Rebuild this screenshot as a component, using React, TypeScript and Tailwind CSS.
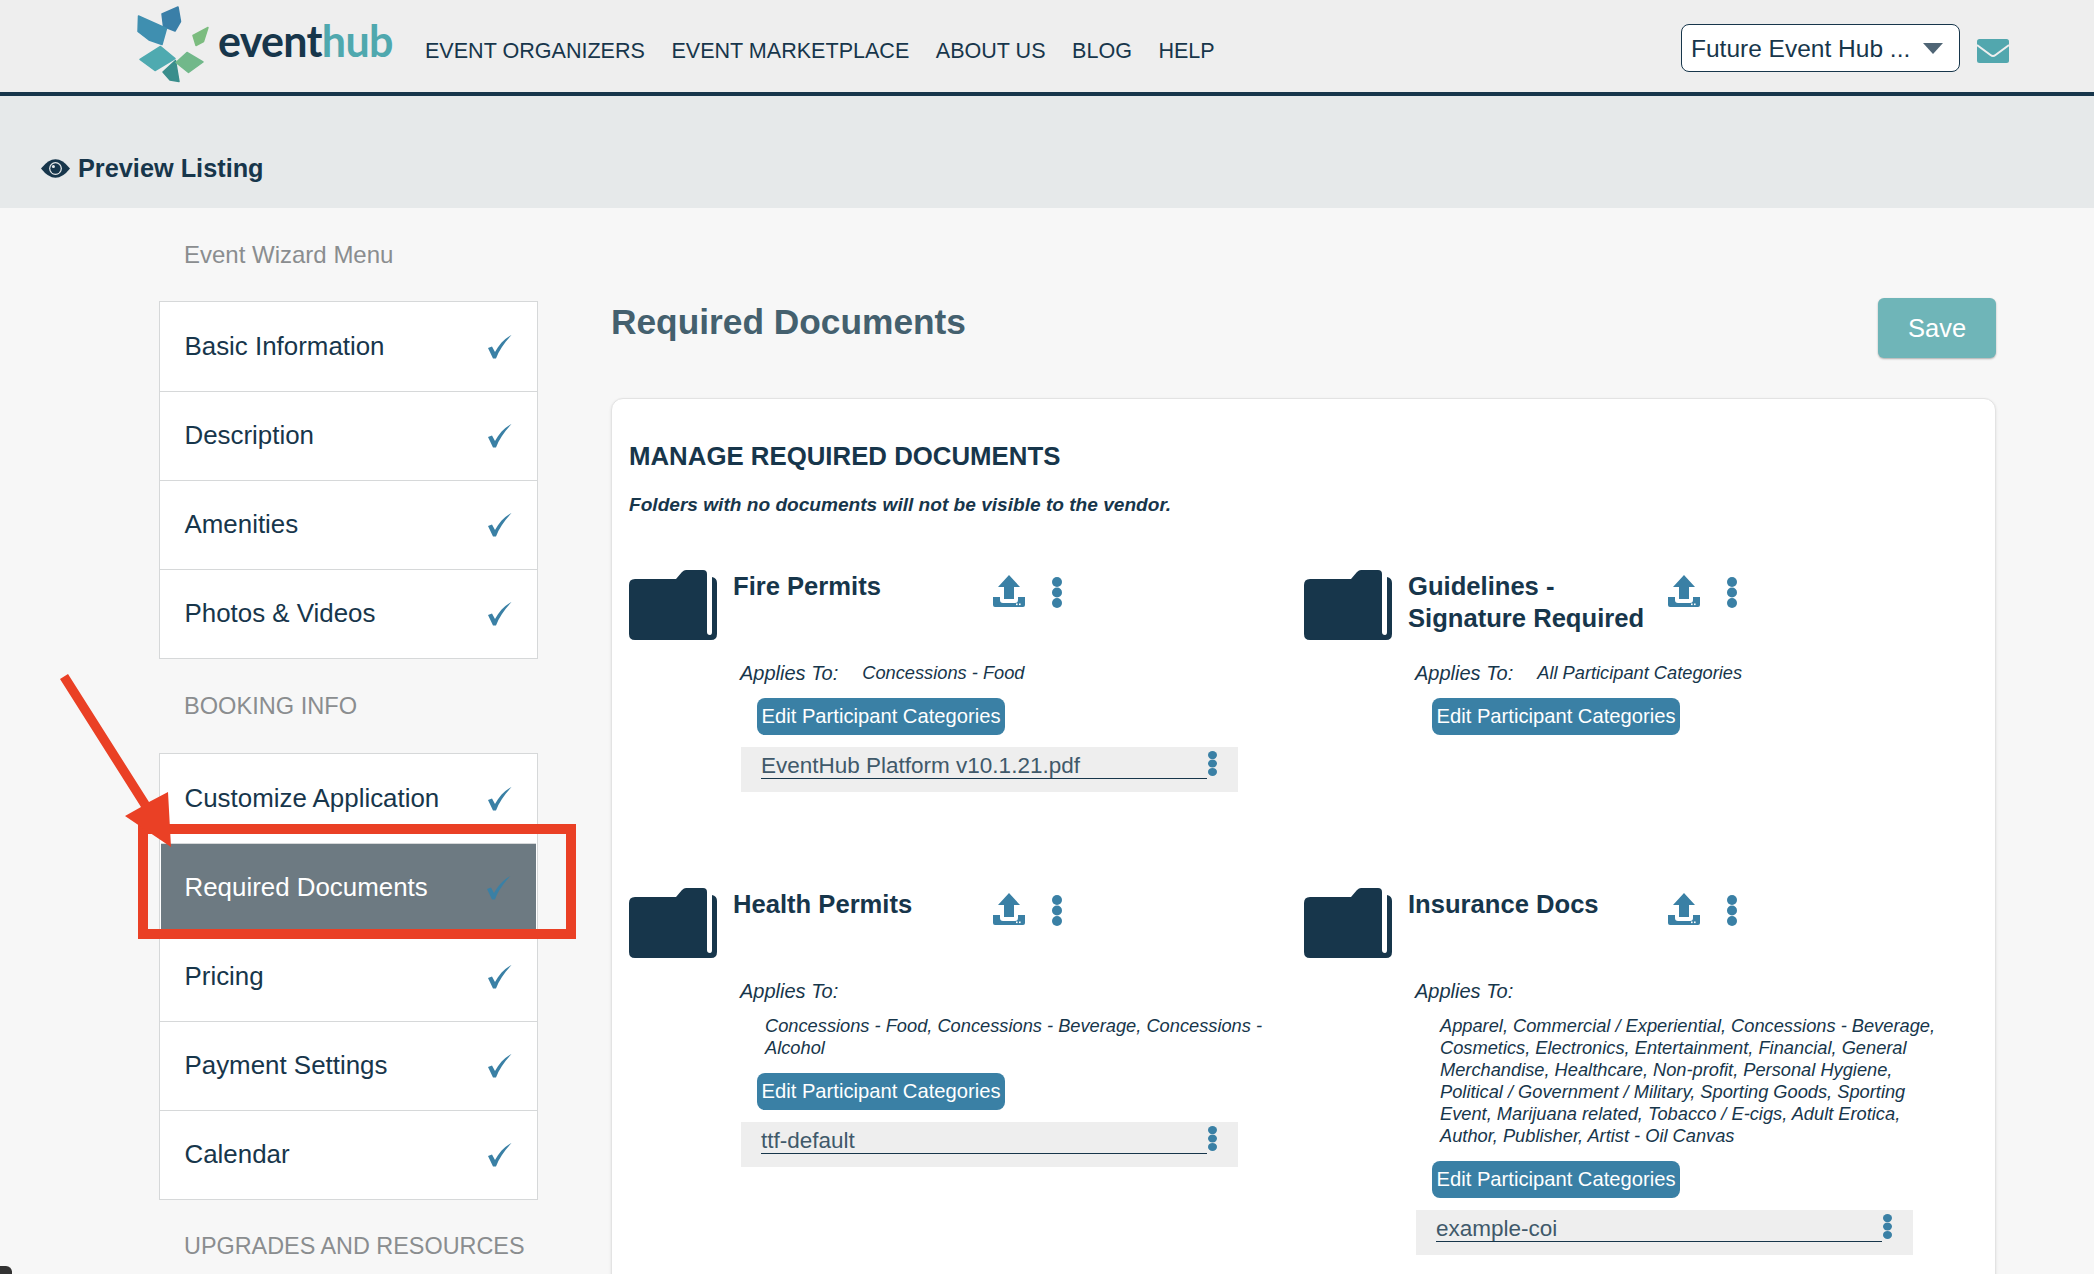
import React from 'react'

const navLinks = ['EVENT ORGANIZERS', 'EVENT MARKETPLACE', 'ABOUT US', 'BLOG', 'HELP']
const wizardItems = ['Basic Information', 'Description', 'Amenities', 'Photos & Videos']
const bookingItems = ['Customize Application', 'Required Documents', 'Pricing', 'Payment Settings', 'Calendar']

function Logo() {
  return (
    <svg width="76" height="84" viewBox="0 0 76 84" className="shrink-0">
      <g strokeWidth="1.5" strokeLinejoin="round">
        <polygon points="25,14 41,7 43.5,21.5 38,31 26.5,26.5" fill="#3a7fa8" stroke="#3a7fa8" />
        <polygon points="1.5,16 29.5,28.5 25,44.5 12,40 1,31.5" fill="#3f8fb0" stroke="#3f8fb0" />
        <polygon points="3,59.5 23.5,46.5 38,58.5 18,70.5" fill="#4faab0" stroke="#4faab0" />
        <polygon points="26,72 38.5,60.5 42,81.5 33,80" fill="#3a8e8c" stroke="#3a8e8c" />
        <polygon points="39,62.5 50,52.5 66,62 51.5,72.5" fill="#71b88a" stroke="#71b88a" />
        <polygon points="56,35.5 71,27.5 66.5,41.5 59,45.5" fill="#7cbc7f" stroke="#7cbc7f" />
      </g>
    </svg>
  )
}

function Check() {
  return (
    <svg width="24" height="24" viewBox="0 0 24 24" className="shrink-0">
      <path d="M0 13 L4 11.5 L7 17 C11 10 16 4 23.5 0 C17 7 11 15 8 23.5 L5 23.5 Z" fill="#3a80a5" />
    </svg>
  )
}

function Dots({ small }: { small?: boolean }) {
  return (
    <svg width={small ? 9 : 10} height={small ? 25 : 31} viewBox="0 0 10 31" preserveAspectRatio="none" className="shrink-0">
      <ellipse cx="5" cy="5" rx="5" ry="5" fill="#3a80a5" />
      <ellipse cx="5" cy="15.5" rx="5" ry="5" fill="#3a80a5" />
      <ellipse cx="5" cy="26" rx="5" ry="5" fill="#3a80a5" />
    </svg>
  )
}

function Folder() {
  return (
    <svg width="88" height="70" viewBox="0 0 88 70" className="shrink-0">
      <path
        d="M6 9 H47 L53 2 Q55 0 57 0 H74 Q78 0 78 4 V62 Q78 65 81 65 Q83 65 83 62 V7 Q88 8 88 13 V64 Q88 70 82 70 H6 Q0 70 0 64 V15 Q0 9 6 9 Z"
        fill="#17364b"
      />
    </svg>
  )
}

function UploadIcon() {
  return (
    <svg width="32" height="32" viewBox="0 0 32 32" className="shrink-0">
      <path d="M16 0 L27 12 H21 V24 H11 V12 H5 Z" fill="#3a80a5" />
      <path d="M0 22 H7 V25 Q7 28 10 28 H22 Q25 28 25 25 V22 H32 V30 Q32 32 30 32 H2 Q0 32 0 30 Z" fill="#3a80a5" />
      <rect x="23" y="28.5" width="1.6" height="1.6" fill="#fff" />
      <rect x="26" y="28.5" width="1.6" height="1.6" fill="#fff" />
    </svg>
  )
}

function MenuCard({ items, active }: { items: string[]; active?: string }) {
  return (
    <div className="border border-[#d6d8d9] bg-white">
      {items.map((item, idx) => (
        <div
          key={item}
          className={`flex h-[89px] items-center justify-between pr-[25px] ${idx > 0 ? 'border-t border-[#d6d8d9]' : ''} ${
            item === active ? 'mx-[1px] bg-[#6d7a82] pl-[23.5px] pr-[24px] text-white' : 'pl-[24.5px] text-[#17364b]'
          }`}
        >
          <span className="text-[25.9px] leading-none">{item}</span>
          <Check />
        </div>
      ))}
    </div>
  )
}

interface DocFolderProps {
  title: React.ReactNode
  applies: string
  inline?: boolean
  file?: string
}

function DocFolder({ title, applies, inline, file }: DocFolderProps) {
  return (
    <div className="min-h-[318px]">
      <div className="flex h-[70px] items-start">
        <Folder />
        <div className="ml-[16px] w-[260px] text-[25.6px] font-bold leading-[32px] text-[#17364b]">{title}</div>
        <div className="mt-[5px]">
          <UploadIcon />
        </div>
        <div className="ml-[27px] mt-[7px]">
          <Dots />
        </div>
      </div>
      <div className="ml-[111px] mt-[21px] flex text-[20px] italic leading-[24px] text-[#17364b]">
        <span>Applies To:</span>
        {inline && <span className="ml-[24px] text-[18.25px]">{applies}</span>}
      </div>
      {!inline && (
        <p className="ml-[136px] mb-[14px] mt-[12px] w-[510px] text-[18.25px] italic leading-[22px] text-[#17364b]">{applies}</p>
      )}
      <div className={`ml-[128px] flex h-[37px] w-[248px] items-center justify-center rounded-lg bg-[#3a80a5] text-[20.2px] text-white ${inline ? 'mt-[13px]' : ''}`}>
        Edit Participant Categories
      </div>
      {file && (
        <div className="ml-[112px] mt-[12px] flex h-[45px] w-[497px] items-start bg-[#eeeeee] pl-[20px] pr-[21px]">
          <div className="h-[32px] flex-1 border-b border-[#17364b] pt-[5px] text-[22.5px] leading-[28px] text-[#40596a]">
            {file}
          </div>
          <div className="ml-[1px] mt-[4px]">
            <Dots small />
          </div>
        </div>
      )}
    </div>
  )
}

export default function App() {
  return (
    <div className="relative h-[1274px] w-[2094px] overflow-hidden bg-[#f7f7f7] font-['Liberation_Sans',sans-serif]">
      <header className="flex h-[96px] items-center border-b-[4px] border-[#17364b] bg-[#eeeeee] pl-[137px] pr-[85px] shadow-[0_2px_4px_rgba(0,0,0,0.35)]">
        <div className="-mt-[8px] flex w-[288px] items-start">
          <Logo />
          <span className="ml-[5px] mt-[19px] font-['Lato',sans-serif] text-[43px] font-bold leading-none tracking-[-0.7px]">
            <span className="text-[#17364b]">event</span>
            <span className="text-[#4fa8ae]">hub</span>
          </span>
        </div>
        <nav className="mt-[11px] flex gap-[26.5px] text-[21.55px] text-[#17364b]">
          {navLinks.map((link) => (
            <span key={link}>{link}</span>
          ))}
        </nav>
        <div className="ml-auto mt-[4px] flex h-[48px] w-[279px] items-center rounded-lg border border-[#17364b] bg-white pl-[9px] pr-[16px] text-[24.5px] text-[#17364b]">
          <span className="flex-1 pt-[3px]">Future Event Hub ...</span>
          <svg width="20" height="11" viewBox="0 0 20 11">
            <polygon points="0,0 20,0 10,11" fill="#4f6575" />
          </svg>
        </div>
        <svg width="32" height="24" viewBox="0 0 32 24" className="ml-[17px] mt-[10px]">
          <rect width="32" height="24" rx="2.5" fill="#52a7ae" />
          <path d="M0 6 L13.5 16 Q16 18 18.5 16 L32 6" fill="none" stroke="#eeeeee" strokeWidth="2" />
        </svg>
      </header>

      <div className="flex h-[112px] items-end bg-[#e6e9ea] pb-[24px] pl-[41px]">
        <div className="flex items-center gap-[8px] text-[25.3px] font-bold leading-[32px] text-[#17364b]">
          <svg width="29" height="19" viewBox="0 0 28 18">
            <path d="M0 9 Q7 0 14 0 Q21 0 28 9 Q21 18 14 18 Q7 18 0 9 Z" fill="#17364b" />
            <circle cx="14" cy="9" r="6.2" fill="#e6e9ea" />
            <circle cx="14" cy="9" r="5" fill="#17364b" />
            <circle cx="12" cy="7" r="1.5" fill="#e6e9ea" />
          </svg>
          Preview Listing
        </div>
      </div>

      <div className="flex">
        <aside className="ml-[159px] w-[379px] shrink-0">
          <div className="flex h-[93px] items-center pl-[25px] text-[24px] text-[#8a8d8f]">Event Wizard Menu</div>
          <MenuCard items={wizardItems} />
          <div className="flex h-[94px] items-center pl-[25px] pt-[1px] text-[23.6px] text-[#8a8d8f]">BOOKING INFO</div>
          <MenuCard items={bookingItems} active="Required Documents" />
          <div className="flex h-[94px] items-center whitespace-nowrap pl-[25px] text-[23.4px] text-[#8a8d8f]">UPGRADES AND RESOURCES</div>
        </aside>

        <main className="ml-[73px] w-[1385px] shrink-0 pt-[90px]">
          <div className="flex items-start justify-between">
            <h1 className="pt-[1px] text-[35.3px] font-bold leading-[46px] text-[#44606e]">Required Documents</h1>
            <div className="flex h-[60px] w-[118px] items-center justify-center rounded-md bg-[#6fb5b8] text-[25.5px] text-white shadow-[0_1px_2px_rgba(0,0,0,0.3)]">
              Save
            </div>
          </div>
          <section className="mt-[40px] h-[1000px] rounded-xl border border-[#e3e3e3] bg-white pl-[17px] pt-[41px] shadow-[0_1px_3px_rgba(0,0,0,0.1)]">
            <h2 className="text-[25.8px] font-bold leading-[32px] text-[#17364b]">MANAGE REQUIRED DOCUMENTS</h2>
            <p className="mt-[21px] text-[19.1px] font-bold italic leading-[24px] text-[#17364b]">
              Folders with no documents will not be visible to the vendor.
            </p>
            <div className="mt-[53px] grid grid-cols-[675px_675px]">
              <DocFolder title="Fire Permits" applies="Concessions - Food" inline file="EventHub Platform v10.1.21.pdf" />
              <DocFolder
                title={
                  <>
                    Guidelines -<br />
                    Signature Required
                  </>
                }
                applies="All Participant Categories"
                inline
              />
              <DocFolder
                title="Health Permits"
                applies="Concessions - Food, Concessions - Beverage, Concessions - Alcohol"
                file="ttf-default"
              />
              <DocFolder
                title="Insurance Docs"
                applies="Apparel, Commercial / Experiential, Concessions - Beverage, Cosmetics, Electronics, Entertainment, Financial, General Merchandise, Healthcare, Non-profit, Personal Hygiene, Political / Government / Military, Sporting Goods, Sporting Event, Marijuana related, Tobacco / E-cigs, Adult Erotica, Author, Publisher, Artist - Oil Canvas"
                file="example-coi"
              />
            </div>
          </section>
        </main>
      </div>

      {/* annotation drawn over the screenshot */}
      <div className="absolute left-[138px] top-[824px] h-[115px] w-[438px] border-[10px] border-[#ea4025]" />
      <svg width="200" height="200" viewBox="0 0 200 200" className="absolute left-[50px] top-[660px]">
        <polygon points="10,19 18,14 99,142 118,132 121,187 75,156 91,147" fill="#ea4025" />
      </svg>
      <div className="absolute bottom-0 left-0 h-[8px] w-[12px] rounded-tr-md bg-[#333]" />
    </div>
  )
}
